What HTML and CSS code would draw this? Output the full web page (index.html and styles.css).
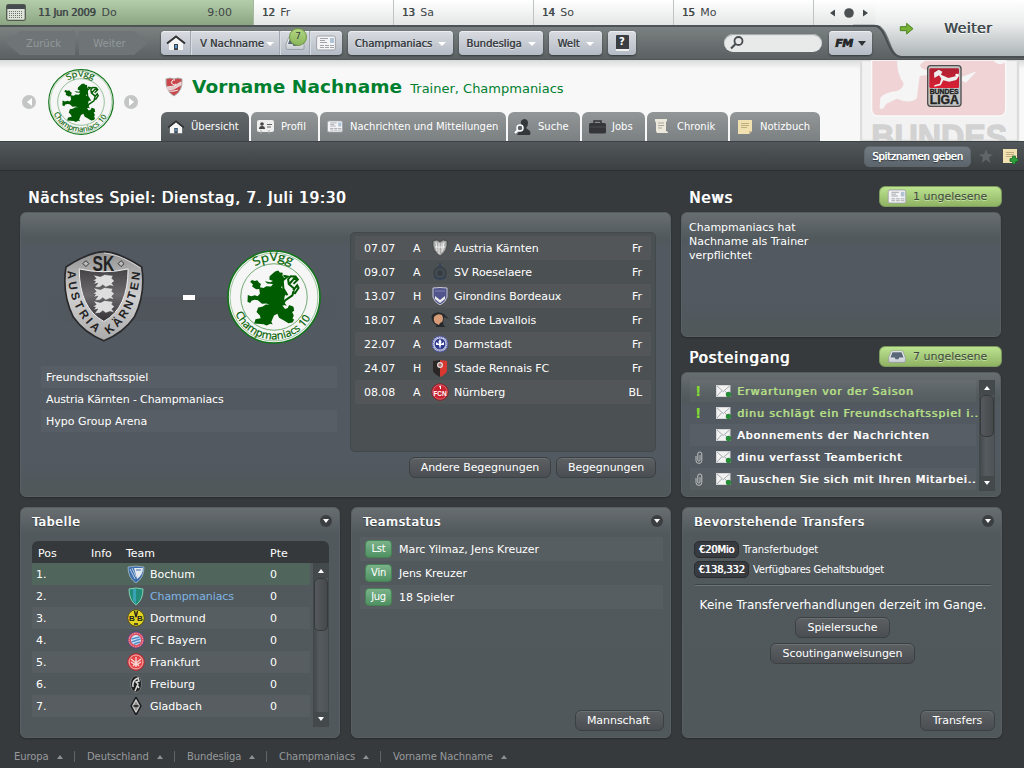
FILE: index.html
```html
<!DOCTYPE html>
<html lang="de">
<head>
    <meta charset="UTF-8">
    <meta name="viewport" content="width=device-width, initial-scale=1.0">
    <title>Vorname Nachname - Übersicht</title>
    <link rel="stylesheet" href="styles.css">
</head>
<body>
    <svg class="defs">
        <defs>
            <linearGradient id="hell" x2="0" y2="1"><stop offset="0" stop-color="#fff"/><stop offset="1" stop-color="#c4c8cf"/></linearGradient>
            <linearGradient id="rot" x2="0" y2="1"><stop offset="0" stop-color="#ae2032"/><stop offset="1" stop-color="#db1f35"/></linearGradient>
            <linearGradient id="silber" x2="0" y2="1"><stop offset="0" stop-color="#929292"/><stop offset=".5" stop-color="#d0d0d0"/><stop offset="1" stop-color="#aaa"/></linearGradient>
            <linearGradient id="dunkel" x2="0" y2="1"><stop offset="0" stop-color="#454346"/><stop offset=".5" stop-color="#6d6a6d"/><stop offset="1" stop-color="#343234"/></linearGradient>
            <linearGradient id="weiterBg" x2="0" y2="1"><stop offset="0" stop-color="#fff"/><stop offset=".4" stop-color="#eceeee"/><stop offset="1" stop-color="#adb4b6"/></linearGradient>
        </defs>
        <symbol id="haus" viewBox="0 0 20 16">
            <path d="M3 8 10 2l7 6v7H3z" fill="#f6f6f6"/>
            <path d="M1 8.500 10 1.500l9 7" fill="none" stroke="#303234" stroke-width="2"/>
            <path d="M8 9h4v6H8z" fill="#3d454d"/><path d="M9 10h2v3H9z" fill="#5b97cc"/>
        </symbol>
        <symbol id="zeitung" viewBox="0 0 20 16">
            <rect x=".6" y="1" width="18.800" height="14" rx="2" fill="#f4f4f6" stroke="#9ea2a8"/>
            <path d="M4 3.500h8M4 5.500h5M4 7.500h7M4 10.500h4M9 10.500h4M14 10.500h4M4 12.500h4M9 12.500h4M14 12.500h4" stroke="#a0a3a8"/>
            <path d="M14 3h4v5h-4z" fill="#b0c4d6"/>
        </symbol>
        <symbol id="ablage" viewBox="0 0 20 14">
            <path d="M4 1h12l3 7v4q0 1.500-1.500 1.500h-15Q1 13.500 1 12V8z" fill="url(#hell)" stroke="#8b9198" stroke-width=".7"/>
            <path d="M5 2.500h10L17 8h-4.500l-1 2h-3l-1-2H3z" fill="#596779"/>
        </symbol>
        <symbol id="brief" viewBox="0 0 16 13">
            <rect x=".5" y=".5" width="13.500" height="11" fill="#f2f2f3" stroke="#d4d6d8"/>
            <path d="M1 1l6.200 5.500L13.500 1M1 11l4.500-5M13.500 11 9 6" fill="none" stroke="#a5aaad"/>
            <circle cx="12.500" cy="9.500" r="2.700" fill="#278a37"/>
        </symbol>
        <symbol id="klammer" viewBox="0 0 8 13">
            <path d="M1 5v4.500a2.800 2.800 0 0 0 5.800 0V3a2 2 0 0 0-4 0v6a1 1 0 0 0 2.200 0V4" fill="none" stroke="#c9cccd" stroke-width=".9"/>
        </symbol>
        <symbol id="notiz" viewBox="0 0 14 14">
            <path d="M0 0h14v11l-3 3H0z" fill="#f1e0b0"/><path d="M14 11h-3v3z" fill="#cbb98d"/>
            <path d="M3 3.500h8M3 5.500h8M3 7.500h6" stroke="#b39f73" stroke-width=".8"/>
        </symbol>
    </svg>

    <div class="kalender">
        <div class="heute">
            <svg width="20" height="17" viewBox="0 0 20 17"><rect x=".7" y=".7" width="18.600" height="15.600" rx="1.500" fill="#dfe4da" stroke="#52594f" stroke-width="1.300"/><path d="M1 1h18v4H1z" fill="#454b50"/><path d="M3 7.500h14M3 9.500h14M3 11.500h14M3 13.500h14" stroke="#6d756b" stroke-dasharray="1 1"/></svg>
            <b>11 Jun 2009</b><span>Do</span><span class="uhr">9:00</span>
        </div>
        <div class="tag"><b>12</b> Fr</div>
        <div class="tag"><b>13</b> Sa</div>
        <div class="tag"><b>14</b> So</div>
        <div class="tag"><b>15</b> Mo</div>
        <svg class="kal-pfeile" width="40" height="12" viewBox="0 0 40 12"><path d="M6 2.500v7L1 6zM34 2.500v7l5-3.500z" fill="#444a4b"/><circle cx="20" cy="6" r="4.800" fill="#4c5051"/></svg>
    </div>

    <div class="navi">
        <div class="schritt zurueck">Zurück</div>
        <div class="schritt vor">Weiter</div>
        <div class="gruppe">
            <div class="btn-home"><svg width="20" height="16"><use href="#haus"/></svg></div>
            <div class="btn-name">V Nachname<i class="pfeil"></i></div>
            <div class="btn-ablage"><svg width="20" height="14"><use href="#ablage"/></svg><span class="zahl">7</span></div>
            <div class="btn-news"><svg width="20" height="16"><use href="#zeitung"/></svg></div>
        </div>
        <div class="btn-nav w-champ">Champmaniacs<i class="pfeil"></i></div>
        <div class="btn-nav w-liga">Bundesliga<i class="pfeil"></i></div>
        <div class="btn-nav w-welt">Welt<i class="pfeil"></i></div>
        <div class="btn-nav w-hilfe"><span class="buch">?</span></div>
        <div class="suche"><svg width="14" height="14" viewBox="0 0 14 14"><circle cx="8.500" cy="5" r="4" fill="none" stroke="#484e50" stroke-width="1.800"/><path d="M5.500 8 1 12.500" stroke="#484e50" stroke-width="2.200"/></svg></div>
        <div class="btn-nav w-fm"><span class="fm">FM</span><i class="pfeil"></i></div>
    </div>

    <div class="weiter">
        <svg width="171" height="60" viewBox="513 0 513 180">
            <path d="M580 0H1026V169H660C620 169 626 75 580 75z" fill="url(#weiterBg)"/>
            <path d="M513 77H575C618 77 612 171 658 171H1026" fill="none" stroke="#494f51" stroke-width="6"/>
            <path d="M655 80h19V70l19 16-19 16V92h-19z" fill="#76b035" stroke="#4d8420" stroke-width="3"/>
        </svg>
        <span>Weiter</span>
    </div>

    <div class="kopf">
        <i class="rund links"></i>
        <svg class="kopf-wappen" width="66" height="66" viewBox="0 0 280 280">
            <g id="loewe">
                <circle cx="140" cy="140" r="137" fill="#f5f6f5" stroke="#12751b" stroke-width="5"/>
                <circle cx="140" cy="140" r="131" fill="none" stroke="#75ad78" stroke-width="2"/>
                <circle cx="140" cy="140" r="99" fill="none" stroke="#308335" stroke-width="2"/>
                <g fill="#005c00">
                    <path d="M143 64l10-3 4 6 9 1-1 8 6 9-4 9 2 9-8 8 9 8 9 9-7 9-3 17 9 12-9-2-14 4-6-4-18 2-13-7-14 1-12-10-10-2-9 3-4 7-8-4 1-20 10 4 11-3 8 3 7-8-2-14-9 1-12-8 2-7-8-7 5-6 9 3 7-2 5 7 6 4-3 10 11 2 8-5 14 1 6-8-17-1-7-7 16 3 8-4-11-4 1-10z"/>
                    <path d="M88 185l5-14 12-2 11-7 21 1 14-5 12 5 10 13 8-3 4-9 13 5 2 12-6 4 5 10-4 9 5 4-5 8-12 2-12-7-16-9-5-12-10 5-8 19 4 8-7-2-11 5-9-4-28-2 4-13 15-3-2-8z"/>
                </g>
                <path d="M165 165l8-15 22-15 5-20-16-14-2-14 8-9 14 1 8 10M180 135l-12-20-2-24 14-12-12-2M184 103l16-18 10 4-12 12M197 120l12-15 4 8-12 18" fill="none" stroke="#005c00" stroke-width="6"/>
                <path id="bogenOben" d="M84 49A106 106 0 0 1 198 49" fill="none"/>
                <path id="bogenUnten" d="M25 189A124 124 0 0 0 256 186" fill="none"/>
                <text class="wappen-text" font-size="35"><textPath href="#bogenOben" textLength="113" lengthAdjust="spacingAndGlyphs">SpVgg</textPath></text>
                <text class="wappen-text" font-size="32"><textPath href="#bogenUnten" textLength="280" lengthAdjust="spacingAndGlyphs">Champmaniacs 10</textPath></text>
            </g>
        </svg>
        <i class="rund rechts"></i>
        <div class="kopf-mitte">
            <div class="titel">
                <svg width="20" height="20" viewBox="0 0 20 20"><path d="M2 2q4-2 8 0 4-2 8 0 1 12-8 17Q1 14 2 2z" fill="#c9484d" stroke="#aaa"/><path d="M3 10l7-1 7-4v3l-7 4-7 1zM5 14q5 1 9-1" stroke="#eadede" fill="#e5caca"/><path d="M11 3a2.500 2.500 0 1 0 1 4" stroke="#fff" fill="none"/></svg>
                <h1>Vorname Nachname</h1>
                <span>Trainer, Champmaniacs</span>
            </div>
            <div class="tabs">
                <div class="tab aktiv t1"><svg width="16" height="14" viewBox="1 0 18 16"><use href="#haus" width="20" height="16"/></svg>Übersicht</div>
                <div class="tab t2"><svg width="17" height="14" viewBox="0 0 17 14"><rect width="17" height="12" rx="2" fill="#eee"/><circle cx="5" cy="4" r="1.800" fill="#444"/><path d="M2 9q0-3 3-3t3 3z" fill="#444"/><path d="M10 4.500h5M10 7h4" stroke="#666"/><path d="M4 10v4M12 10v4" stroke="#aaa"/></svg>Profil</div>
                <div class="tab t3"><svg width="16" height="15"><use href="#zeitung"/></svg>Nachrichten und Mitteilungen</div>
                <div class="tab t4"><svg width="17" height="16" viewBox="0 0 17 16"><path d="M7 5q-1-4 3-5 4 0 4 4 0 3-2 5l4 3q1 2 0 4H3q2-4 5-6z" fill="#35383a"/><circle cx="6" cy="9" r="3" fill="#5c6164" stroke="#fff" stroke-width="1.500"/><path d="M4 11l-3 3" stroke="#fff" stroke-width="2"/></svg>Suche</div>
                <div class="tab t5"><svg width="17" height="14" viewBox="0 0 17 14"><path d="M5 3V1h7v2" fill="none" stroke="#303234" stroke-width="1.500"/><rect y="3" width="17" height="10.500" rx="1.500" fill="#343638"/><path d="M0 7h17" stroke="#4b4e50"/></svg>Jobs</div>
                <div class="tab t6"><svg width="14" height="15" viewBox="0 0 14 15"><path d="M0 0h12v2l-1 1v9l2 1v1H2l-1-2V4L0 2z" fill="#ece9dc"/><path d="M3 4h6M3 6.500h6M3 9h4" stroke="#aaa796"/></svg>Chronik</div>
                <div class="tab t7"><svg width="14" height="14"><use href="#notiz"/></svg>Notizbuch</div>
            </div>
        </div>
        <svg class="liga" width="160" height="81" viewBox="534 180 480 243">
            <path d="M537 180H1008V423H537z" fill="#f2f2f2" stroke="#dcdcdc" stroke-width="7"/>
            <path d="M569 180H971V328q0 20-20 20H589q-20 0-20-20z" fill="#efd3d5" stroke="#fafafa" stroke-width="4"/>
            <path d="M645 180q0 45 20 70-2 17-20 23-35 3-50 20l-2 32q11 7 19-13l33-16q40 18 60-2 3-30 8-65 15-5 30-2V213Q690 200 735 180zM838 231l46-17-32 34-14-6z" fill="#f5f5f5"/>
            <path d="M932 180q20 22 39 6v-6z" fill="#f5f5f5"/>
            <text x="568" y="446" class="liga-gross" font-size="106" textLength="408" lengthAdjust="spacingAndGlyphs">BUNDES</text>
            <rect x="737" y="197" width="100" height="122" rx="9" fill="#c4c4c4" stroke="#4e4e4e" stroke-width="4"/>
            <rect x="742" y="205" width="89" height="59" rx="4" fill="url(#rot)"/>
            <path d="M756 218l14-9 11 6-4 9 22 10 24-6 7-8 1 8-8 12-22 5-17-4-8 15-20 4 2-5 15-4 5-15-7-10-14 8z" fill="#eee"/><circle cx="824" cy="225" r="4" fill="#fff"/>
            <text x="743" y="281" class="liga-klein" font-size="19" textLength="87" lengthAdjust="spacingAndGlyphs">BUNDES</text>
            <text x="743" y="311" class="liga-klein" font-size="36" textLength="88" lengthAdjust="spacingAndGlyphs">LIGA</text>
        </svg>
    </div>

    <div class="leiste">
        <div class="spitzname">Spitznamen geben</div>
        <svg width="14" height="14" viewBox="0 0 14 14"><path d="M7 0l2 5 5 .2-4 3.200L11.500 14 7 10.800 2.500 14 4 8.400 0 5.200 5 5z" fill="#5f6568"/></svg>
        <svg width="15" height="15" viewBox="0 0 15 15"><use href="#notiz" width="14" height="14"/><path d="M9.500 7h3v2.500H15v3h-2.500V15h-3v-2.500H7v-3h2.500z" fill="#2aa239" stroke="#145f22" stroke-width=".7"/></svg>
    </div>

    <div class="inhalt">
        <div class="oben">
            <div class="spiel">
                <h2>Nächstes Spiel: Dienstag, 7. Juli 19:30</h2>
                <div class="panel spiel-panel">
                    <div class="begegnung">
                        <div class="wappen-reihe">
                            <svg width="82" height="93" viewBox="0 0 245 280">
                                <path d="M122 5Q170 8 236 51 249 130 214 202 180 251 122 273 64 251 30 202-5 130 8 51 74 8 122 5z" fill="url(#silber)" stroke="#29292c" stroke-width="5"/>
                                <path d="M122 9Q170 12 232 54" fill="none" stroke="#eee" stroke-width="2"/>
                                <path d="M48 57Q122 74 195 57 195 175 122 215 48 175 48 57z" fill="url(#dunkel)" stroke="#eee" stroke-width="3"/>
                                <g fill="#dedede" stroke="#39393b" stroke-width="1.500">
                                    <path d="M90 75l22 5 12-6 26 3-4 8 8 8-8 7 8 10-14-3-12 5-9-7-9 7-16 1 10-13-13 3 6-9-9-2 11-6z"/>
                                    <path d="M90 114l22 5 12-6 26 3-4 8 8 8-8 7 8 10-14-3-12 5-9-7-9 7-16 1 10-13-13 3 6-9-9-2 11-6z"/>
                                    <path d="M90 153l22 5 12-6 26 3-4 8 8 8-8 7 8 10-14-3-12 5-9-7-9 7-16 1 10-13-13 3 6-9-9-2 11-6z"/>
                                </g>
                                <path d="M68 32l9 9-9 9-9-9zM174 32l9 9-9 9-9-9z" fill="#bbb" stroke="#333" stroke-width="3"/>
                                <path id="kLinks" d="M13 62Q15 186 106 255" fill="none"/>
                                <path id="kRechts" d="M136 255Q224 195 232 58" fill="none"/>
                                <text class="austria-text" x="88" y="62" font-size="64" textLength="65" lengthAdjust="spacingAndGlyphs">SK</text>
                                <text class="austria-text" font-size="35"><textPath href="#kLinks" textLength="212" lengthAdjust="spacing">AUSTRIA</textPath></text>
                                <text class="austria-text" font-size="35"><textPath href="#kRechts" textLength="219" lengthAdjust="spacing">KÄRNTEN</textPath></text>
                            </svg>
                            <i class="strich"></i>
                            <svg width="94" height="94" viewBox="0 0 280 280"><use href="#loewe"/></svg>
                        </div>
                        <div class="zeile hell">Freundschaftsspiel</div>
                        <div class="zeile enger">Austria Kärnten - Champmaniacs</div>
                        <div class="zeile hell">Hypo Group Arena</div>
                    </div>
                    <div class="termine">
                        <div class="termin-liste">
                            <div class="termin"><span>07.07</span><span>A</span><svg width="18" height="18" viewBox="0 0 18 18"><path d="M2 2l4-1 3 2 3-2 4 1q1 10-7 15Q1 12 2 2z" fill="#aaa" stroke="#333" stroke-width=".6"/><path d="M5 3l1 9M8 4v11M11 4v9M13 3l-1 8M4 8h10" stroke="#f0f0f0" fill="none"/></svg><span>Austria Kärnten</span><em>Fr</em></div>
                            <div class="termin"><span>09.07</span><span>A</span><svg width="18" height="18" viewBox="0 0 18 18"><circle cx="9" cy="10" r="6" fill="#444b50" stroke="#2e373e"/><path d="M3 14q6 4 12 0" stroke="#2b405a" fill="none" stroke-width="1.500"/><path d="M9 0v5" stroke="#333e5c" stroke-width="1.500"/><circle cx="9" cy="10" r="2.500" fill="#353b40"/></svg><span>SV Roeselaere</span><em>Fr</em></div>
                            <div class="termin"><span>13.07</span><span>H</span><svg width="18" height="18" viewBox="0 0 18 18"><path d="M2 1q7-1 14 0v9q-1 5-7 8-6-3-7-8z" fill="#51548b" stroke="#c6c8d6"/><path d="M4 4h10" stroke="#7e82b0"/><path d="M4 9l5 4 5-4v3l-5 4-5-4z" fill="#eee"/></svg><span>Girondins Bordeaux</span><em>Fr</em></div>
                            <div class="termin"><span>18.07</span><span>A</span><svg width="18" height="18" viewBox="0 0 18 18"><path d="M1 4Q6-1 13 3l5 5-5-2-1 6 1 3-7 0Q-1 10 1 4z" fill="#27292a"/><path d="M3 6q3-4 8-2 2 4 0 7l-2 1-1 2-4-2Q2 9 3 6z" fill="#d89c78"/><path d="M5 15.500h9" stroke="#25282a"/></svg><span>Stade Lavallois</span><em>Fr</em></div>
                            <div class="termin"><span>22.07</span><span>A</span><svg width="18" height="18" viewBox="0 0 18 18"><circle cx="9" cy="9" r="8" fill="#d0d2e4" stroke="#4b529a"/><circle cx="9" cy="9" r="6.800" fill="none" stroke="#4b529a" stroke-dasharray="1 1"/><circle cx="9" cy="9" r="5.500" fill="#2e3990"/><path d="M9 4l1.500 2.500L10 9l3-2v3l-3 0-1 4-1-4-3 0V7l3 2-.500-2.500z" fill="#fff"/></svg><span>Darmstadt</span><em>Fr</em></div>
                            <div class="termin"><span>24.07</span><span>H</span><svg width="18" height="18" viewBox="0 0 18 18"><path d="M2 2l7-1v17q-6-3-7-6z" fill="#292625"/><path d="M9 1l7 1v10q-2 4-7 6z" fill="#d93831"/><circle cx="9" cy="6" r="3" fill="#ddd"/><path d="M9 4v4M7 6h4" stroke="#a44"/></svg><span>Stade Rennais FC</span><em>Fr</em></div>
                            <div class="termin"><span>08.08</span><span>A</span><svg width="18" height="18" viewBox="0 0 18 18"><circle cx="9" cy="9" r="8.200" fill="#c92331" stroke="#842027"/><circle cx="9" cy="9" r="7.200" fill="none" stroke="#e07f86" stroke-width=".7"/><text x="2.500" y="12.500" class="mini" font-size="6.500" fill="#fff" textLength="13" lengthAdjust="spacingAndGlyphs">FCN</text><path d="M8 4l1.500-1v3" stroke="#fff" fill="none"/></svg><span>Nürnberg</span><em>BL</em></div>
                        </div>
                        <div class="knoepfe"><div class="knopf k1">Andere Begegnungen</div><div class="knopf k2">Begegnungen</div></div>
                    </div>
                </div>
            </div>

            <div class="seite">
                <div class="seite-kopf"><h2>News</h2><div class="gruen"><svg width="20" height="15"><use href="#zeitung"/></svg>1 ungelesene</div></div>
                <div class="panel news-panel">Champmaniacs hat<br>Nachname als Trainer<br>verpflichtet</div>
                <div class="seite-kopf post-kopf"><h2>Posteingang</h2><div class="gruen"><svg width="20" height="13"><use href="#ablage"/></svg>7 ungelesene</div></div>
                <div class="panel post-panel">
                    <div class="mails">
                        <div class="mail hell neu"><b class="ausruf">!</b><svg width="16" height="13"><use href="#brief"/></svg><span>Erwartungen vor der Saison</span></div>
                        <div class="mail neu"><b class="ausruf">!</b><svg width="16" height="13"><use href="#brief"/></svg><span>dinu schlägt ein Freundschaftsspiel i..</span></div>
                        <div class="mail hell"><i></i><svg width="16" height="13"><use href="#brief"/></svg><span>Abonnements der Nachrichten</span></div>
                        <div class="mail"><i><svg width="8" height="13"><use href="#klammer"/></svg></i><svg width="16" height="13"><use href="#brief"/></svg><span>dinu verfasst Teambericht</span></div>
                        <div class="mail hell"><i><svg width="8" height="13"><use href="#klammer"/></svg></i><svg width="16" height="13"><use href="#brief"/></svg><span>Tauschen Sie sich mit Ihren Mitarbei..</span></div>
                    </div>
                    <div class="scroll"><i class="auf"></i><div class="griff"></div><i class="ab"></i></div>
                </div>
            </div>
        </div>

        <div class="unten">
            <div class="panel karte">
                <div class="karte-kopf"><h3>Tabelle</h3><i class="klapp"></i></div>
                <div class="tabelle">
                    <div class="tab-kopf"><span>Pos</span><span>Info</span><span>Team</span><span>Pte</span></div>
                    <div class="tab-inhalt">
                        <div class="tab-zeilen">
                            <div class="platz erster"><span>1.</span><svg width="18" height="18" viewBox="0 0 18 18"><path d="M1 2l8-1 8 1q0 11-8 16Q1 13 1 2z" fill="#3b6eac" stroke="#cbd6e0" stroke-width=".6"/><path d="M7 3h9q0 7-6 11z" fill="#e5eaf0"/><path d="M3 4l5 10M5 3l4 9" stroke="#b9cde1"/><path d="M9 5h5" stroke="#3b6eac"/></svg><span>Bochum</span><span>0</span></div>
                            <div class="platz"><span>2.</span><svg width="18" height="18" viewBox="0 0 18 18"><path d="M2 2q7-2 14 0 0 11-7 16Q2 13 2 2z" fill="#228b79" stroke="#80d3b0"/><path d="M6 2v11l3 4V2z" fill="#3aa2b5"/></svg><span class="eigen">Champmaniacs</span><span>0</span></div>
                            <div class="platz hell"><span>3.</span><svg width="18" height="18" viewBox="0 0 18 18"><circle cx="9" cy="9" r="8.300" fill="#e1d31f" stroke="#53501b"/><text x="2" y="12" class="mini" font-size="8" fill="#222">B</text><text x="10" y="12" class="mini" font-size="8" fill="#222">B</text><path d="M7.500 2l1.500 6 1.500-6M7 15h4" stroke="#222" fill="none" stroke-width="1.400"/></svg><span>Dortmund</span><span>0</span></div>
                            <div class="platz"><span>4.</span><svg width="18" height="18" viewBox="0 0 18 18"><circle cx="9" cy="9" r="8.300" fill="#d64c60" stroke="#484f86"/><circle cx="9" cy="9" r="6.800" fill="none" stroke="#eea6af" stroke-dasharray="1.500 1"/><circle cx="9" cy="9" r="5" fill="#d8e5f4"/><path d="M4.500 8l8-2M4.500 11l9-3M7 13l6-2" stroke="#4d8dc9" stroke-width="1.500"/></svg><span>FC Bayern</span><span>0</span></div>
                            <div class="platz hell"><span>5.</span><svg width="18" height="18" viewBox="0 0 18 18"><circle cx="9" cy="9" r="8.300" fill="#e64548" stroke="#ad2b31"/><circle cx="9" cy="9" r="7" fill="none" stroke="#f2b2b2"/><path d="M9 4v10M4 6l5 4 5-4M4 9l5 3 5-3M6 13l3-3 3 3" fill="none" stroke="#f6dada" stroke-width="1.300"/></svg><span>Frankfurt</span><span>0</span></div>
                            <div class="platz"><span>6.</span><svg width="18" height="18" viewBox="0 0 18 18"><ellipse cx="9" cy="9" rx="5.500" ry="8.300" fill="#1e1f20" stroke="#70777a"/><path d="M6 12Q5 5 11 3l1 3-3 1 2 2-3 7M10 10l2 3" fill="none" stroke="#ddd" stroke-width="1.500"/></svg><span>Freiburg</span><span>0</span></div>
                            <div class="platz hell"><span>7.</span><svg width="18" height="18" viewBox="0 0 18 18"><path d="M9 0l5 9-5 9-5-9z" fill="#888" stroke="#17191a" stroke-width="1.300"/><path d="M9 3l3 6-3 6-3-6z" fill="none" stroke="#ddd"/><path d="M6.500 9h5" stroke="#333" stroke-width="2"/></svg><span>Gladbach</span><span>0</span></div>
                        </div>
                        <div class="scroll"><i class="auf"></i><div class="griff"></div><i class="ab"></i></div>
                    </div>
                </div>
            </div>

            <div class="panel karte status">
                <div class="karte-kopf"><h3>Teamstatus</h3><i class="klapp"></i></div>
                <div class="status-zeile hell"><b>Lst</b>Marc Yilmaz, Jens Kreuzer</div>
                <div class="status-zeile"><b>Vin</b>Jens Kreuzer</div>
                <div class="status-zeile hell"><b>Jug</b>18 Spieler</div>
                <div class="knopf k3">Mannschaft</div>
            </div>

            <div class="panel karte transfers">
                <div class="karte-kopf"><h3>Bevorstehende Transfers</h3><i class="klapp"></i></div>
                <div class="budget"><b class="b1">€20Mio</b>Transferbudget</div>
                <div class="budget"><b class="b2">€138,332</b>Verfügbares Gehaltsbudget</div>
                <div class="verhandlung">Keine Transferverhandlungen derzeit im Gange.</div>
                <div class="knopf k4">Spielersuche</div>
                <div class="knopf k5">Scoutinganweisungen</div>
                <div class="knopf k6">Transfers</div>
            </div>
        </div>
    </div>

    <div class="fuss">
        <span class="f1">Europa<i></i></span>
        <span class="f2">Deutschland<i></i></span>
        <span class="f3">Bundesliga<i></i></span>
        <span class="f4">Champmaniacs<i></i></span>
        <span>Vorname Nachname<i></i></span>
    </div>
</body>
</html>
```
FILE: styles.css
```css
* {
    box-sizing: border-box;
}

body {
    margin: 0;
    width: 1024px;
    height: 768px;
    overflow: hidden;
    position: relative;
    display: flex;
    flex-direction: column;
    background: #363a3d;
    color: #fff;
    font-family: "DejaVu Sans", sans-serif;
    font-size: 11px;
    white-space: nowrap;
}

.defs {
    position: absolute;
    width: 0;
    height: 0;
}

svg {
    flex: none;
    display: block;
}

h1, h2, h3 {
    margin: 0;
}

/* Kalenderleiste */
.kalender {
    display: flex;
    align-items: center;
    height: 25px;
    color: #3f4748;
    background: linear-gradient(#fff, #e4e6e6);
}

.heute {
    width: 254px;
    height: 25px;
    display: flex;
    align-items: center;
    padding: 0 21px 0 6px;
    background: linear-gradient(#b4cda9, #8ba583);
    border-right: 1px solid #a3b89c;
}

.heute b {
    margin-left: 12px;
    margin-right: 6px;
    font-weight: normal;
    font-size: 10px;
    letter-spacing: -.25px;
    text-shadow: .6px 0 0 #3f4748;
}

.uhr {
    margin-left: auto;
}

.tag {
    width: 140px;
    height: 25px;
    line-height: 25px;
    padding-left: 8px;
    border-right: 1px solid #bfc3c4;
}

.tag b {
    font-size: 10px;
    font-weight: normal;
    text-shadow: .6px 0 0 #3f4748;
    margin-right: 2px;
}

.kal-pfeile {
    margin-left: 15px;
    position: relative;
    z-index: 2;
}

/* Navigation */
.navi {
    height: 35px;
    display: flex;
    align-items: flex-start;
    padding: 5px 0 0 6px;
    border-top: 2px solid #4e5455;
    border-bottom: 1px solid #505657;
    background: linear-gradient(#7a8180, #5b6062);
    color: #3c4245;
    font-size: 10px;
}

.schritt {
    width: 69px;
    height: 24px;
    line-height: 25px;
    text-align: center;
    color: #92989a;
    background: #6f7576;
    margin-top: -1px;
    margin-right: 4px;
}

.zurueck {
    clip-path: polygon(0 50%, 14px 0, 100% 0, 100% 100%, 14px 100%);
    padding-left: 6px;
}

.vor {
    clip-path: polygon(0 0, 55px 0, 100% 50%, 55px 100%, 0 100%);
    padding-right: 8px;
    margin-right: 13px;
}

.gruppe, .btn-nav {
    display: flex;
    align-items: center;
    height: 24px;
    margin-top: -1px;
    border-radius: 4px;
    background: linear-gradient(#d9dce1, #b5bbc5);
    box-shadow: 0 1px 2px #33383a, inset 0 1px 0 #eceef0;
    text-shadow: .3px 0 0 #3c4245, 0 1px 0 #e3e6ea;
}

.gruppe {
    width: 181px;
    margin-right: 6px;
}

.gruppe > div {
    display: flex;
    align-items: center;
    justify-content: center;
    height: 24px;
    position: relative;
}

.gruppe > div + div {
    border-left: 1px solid #a2a8b2;
    box-shadow: inset 1px 0 0 #d9dde2;
}

.gruppe .btn-name {
    justify-content: flex-start;
    padding-left: 9px;
}

.btn-name .pfeil {
    margin-left: 2px;
}

.btn-home { width: 29px; }
.btn-name { width: 89px; }
.btn-ablage { width: 30px; }
.btn-news { width: 33px; }

.zahl {
    position: absolute;
    top: -3px;
    left: 9px;
    width: 18px;
    height: 18px;
    line-height: 15px;
    border-radius: 50%;
    border: 1px solid #6c9340;
    background: linear-gradient(#b2d682, #8ab65b);
    text-align: center;
    text-shadow: none;
    font-size: 9px;
}

.pfeil {
    border: 4px solid transparent;
    border-top-color: #fff;
    border-bottom: 0;
    margin-left: 6px;
    margin-top: 2px;
}

.btn-nav {
    justify-content: center;
    margin-right: 6px;
}

.w-champ { width: 105px; }
.w-liga { width: 84px; }
.w-welt { width: 53px; }
.w-hilfe { width: 28px; }

.w-fm {
    width: 43px;
    margin: -1px 0 0 6px;
}

.w-fm .pfeil {
    border-top: 5px solid #303436;
    border-left-width: 4px;
    margin-left: 5px;
    margin-top: 0;
}

.fm {
    font: italic bold 11px "DejaVu Sans", sans-serif;
    letter-spacing: -.5px;
    color: #26292b;
    -webkit-text-stroke: .6px #26292b;
}

.buch {
    width: 13px;
    height: 16px;
    line-height: 13px;
    border-radius: 1px;
    border-bottom: 2px solid #f1f1f1;
    background: #3a3e42;
    color: #fff;
    text-align: center;
    font-weight: bold;
    text-shadow: none;
}

.suche {
    width: 98px;
    height: 18px;
    margin: 2px 1px 0 82px;
    padding: 2px 0 0 6px;
    border-radius: 9px;
    background: #e8eaea;
    box-shadow: inset 0 1px 1px #a0a5a6;
}

.weiter {
    position: absolute;
    right: 0;
    top: 0;
}

.weiter span {
    position: absolute;
    left: 91px;
    top: 20px;
    font-size: 14px;
    letter-spacing: .45px;
    color: #3d484b;
    text-shadow: .6px 0 0 #3d484b, 0 1px 0 #fff;
}

/* Kopfbereich */
.kopf {
    height: 81px;
    display: flex;
    background: linear-gradient(#d9dada, #f8f8f8 9px);
}

.rund {
    width: 14px;
    height: 14px;
    margin: 35px 0 0 22px;
    border-radius: 50%;
    background: #c4c5c5;
    display: flex;
    align-items: center;
    justify-content: center;
}

.rund::before {
    content: "";
    border: 4px solid transparent;
}

.links::before {
    border-right: 5px solid #fff;
    border-left: 0;
}

.rechts::before {
    border-left: 5px solid #fff;
    border-right: 0;
}

.kopf-wappen {
    margin: 9px 0 0 12px;
}

.kopf .rechts {
    margin-left: 10px;
}

.wappen-text {
    font-family: "Open Sans", sans-serif;
    fill: #006000;
    stroke: #006000;
    stroke-width: .6;
}

.austria-text {
    font-family: "Liberation Sans", sans-serif;
    font-weight: bold;
    fill: #222223;
}

.kopf-mitte {
    width: 661px;
    margin-left: 23px;
}

.titel {
    display: flex;
    align-items: center;
    height: 52px;
    padding-top: 1px;
    padding-left: 3px;
    color: #00802f;
}

.titel h1 {
    font-size: 18.5px;
    margin: 0 8px 0 8px;
    letter-spacing: .1px;
}

.titel span {
    font-size: 13px;
    padding-top: 3px;
}

.tabs {
    display: flex;
    gap: 2px;
}

.tab {
    height: 29px;
    display: flex;
    align-items: center;
    gap: 7px;
    padding-left: 7px;
    border-radius: 6px 6px 0 0;
    background: linear-gradient(#929697, #7b8082);
    font-size: 10px;
}

.tab.aktiv {
    background: linear-gradient(#63696b, #4f5558);
}

.t1 { width: 88px; }
.t2 { width: 67px; padding-left: 6px; }
.t3 { width: 186px; }
.t4 { width: 72px; padding-left: 6px; }
.t5 { width: 63px; gap: 6px; }
.t6 { width: 81px; gap: 8px; padding-left: 8px; }
.t7 { width: 90px; gap: 8px; padding-left: 8px; }

.liga {
    margin-left: 38px;
}

.liga-gross {
    font-family: "Liberation Sans", sans-serif;
    font-weight: bold;
    fill: #d2d2d2;
    stroke: #d2d2d2;
    stroke-width: 4;
}

.liga-klein {
    font-family: "Liberation Sans", sans-serif;
    font-weight: bold;
    fill: #222;
    stroke: #222;
    stroke-width: 1;
}

.mini {
    font-family: "Liberation Sans", sans-serif;
    font-weight: bold;
}

.leiste {
    height: 30px;
    display: flex;
    align-items: center;
    justify-content: flex-end;
    padding-right: 6px;
    border-top: 1px solid #3c4143;
    border-bottom: 1px solid #2c3032;
    background: linear-gradient(#51575a, #3c4042);
}

.spitzname {
    width: 107px;
    height: 21px;
    line-height: 20px;
    margin-right: 8px;
    border-radius: 5px;
    border: 1px solid #5e666c;
    background: linear-gradient(#727b82, #5c646c);
    text-align: center;
    font-size: 10px;
    letter-spacing: -.2px;
    text-shadow: .4px 0 0 #fff, 0 1px 1px #2c3133;
}

.leiste svg {
    margin-right: 9px;
}

.leiste svg:last-child {
    margin: 0 0 0 1px;
}

/* Inhalt */
.inhalt {
    padding: 16px 22px 0 20px;
    height: 567px;
}

.oben {
    display: flex;
    gap: 10px;
    height: 310px;
}

h2 {
    font-size: 15px;
    font-weight: normal;
    letter-spacing: .83px;
    text-shadow: .8px 0 0 #fff;
    height: 25px;
    line-height: 22px;
    padding-left: 8px;
}

.panel {
    border-radius: 6px;
    border: 1px solid #585f62;
    background: linear-gradient(#686d70, #51595c 25px, #525960 34px, #525960 calc(100% - 34px), #50585a);
    box-shadow: 0 1px 2px #282c2e;
}

.spiel-panel {
    width: 651px;
    height: 285px;
    display: flex;
    padding: 19px 14px 0 20px;
}

.begegnung {
    width: 296px;
    margin-right: 13px;
}

.wappen-reihe {
    height: 134px;
    display: flex;
    align-items: flex-start;
    padding: 18px 0 0 22px;
    background: linear-gradient(90deg, transparent, #4f555a 20%, #4f555a 85%, transparent) 0 65px / 100% 24px no-repeat;
}

.strich {
    width: 12px;
    height: 5px;
    margin: 45px 32px 0 38px;
    background: #fff;
}

.zeile {
    height: 22px;
    line-height: 23px;
    padding-left: 5px;
}

.enger {
    letter-spacing: -.13px;
}

.hell {
    background: rgba(255, 255, 255, .035);
}

.termin-liste {
    width: 306px;
    height: 220px;
    padding: 3px 4px;
    border: 1px solid #42484b;
    border-radius: 5px;
    background: #4b5053;
}

.termin {
    display: grid;
    grid-template-columns: 49px 18px 23px 1fr auto;
    align-items: center;
    height: 24px;
    padding: 0 9px;
    letter-spacing: -.06px;
}

.termin:nth-child(odd) {
    background: #525659;
}

.termin em {
    font-style: normal;
}

.knoepfe {
    display: flex;
    justify-content: flex-end;
    gap: 5px;
    margin-top: 5px;
}

.knopf {
    height: 21px;
    line-height: 20px;
    border-radius: 6px;
    border: 1px solid #3b4043;
    background: linear-gradient(#5c6063, #4a4e52);
    box-shadow: inset 0 1px 0 #6b7073;
    text-align: center;
    letter-spacing: -.05px;
}

.k1 { width: 142px; }
.k2 { width: 100px; }

/* rechte Spalte */
.seite {
    width: 321px;
}

.seite-kopf {
    display: flex;
    justify-content: space-between;
    height: 25px;
}

.post-kopf {
    margin-top: 10px;
}

.gruen {
    width: 123px;
    height: 21px;
    margin-top: -1px;
    display: flex;
    align-items: center;
    padding-left: 7px;
    gap: 6px;
    border-radius: 6px;
    border: 1px solid #7d9b5e;
    background: linear-gradient(#bce38f, #8fb363);
    color: #3c463c;
    text-shadow: 0 1px 0 #c5dfa8;
}

.news-panel {
    width: 320px;
    height: 125px;
    padding: 8px 7px;
    line-height: 14px;
}

.post-panel {
    width: 320px;
    height: 125px;
    display: flex;
    padding: 7px 0 0 8px;
}

.mails {
    width: 286px;
    margin-right: 3px;
}

.mail {
    height: 22px;
    display: flex;
    align-items: center;
    text-shadow: .7px 0 0 currentColor;
    letter-spacing: .89px;
}

.mail span {
    margin-left: 5px;
    padding-top: 1px;
}

.mail i, .ausruf {
    flex: none;
    width: 26px;
    padding-left: 5px;
}

.mail.neu {
    color: #b4de87;
}

.mail .ausruf {
    color: #82db32;
    font-size: 14px;
    text-shadow: none;
}

.scroll {
    width: 16px;
    height: 111px;
    flex: none;
    display: flex;
    flex-direction: column;
    background: linear-gradient(90deg, #43484b, #565b60 40%, #4e5357);
    border: 1px solid #43484b;
}

.auf, .ab {
    height: 14px;
    background: #44494c;
    display: flex;
    align-items: center;
    justify-content: center;
}

.auf::before, .ab::before {
    content: "";
    border: 3.5px solid transparent;
}

.auf::before {
    border-bottom: 4px solid #fff;
    border-top: 0;
}

.ab::before {
    border-top: 4px solid #fff;
    border-bottom: 0;
}

.ab {
    margin-top: auto;
}

.griff {
    height: 42px;
    border-radius: 5px;
    border: 1px solid #34393b;
    background: linear-gradient(90deg, #55595d, #45494c);
}

/* untere Karten */
.unten {
    display: flex;
    gap: 11px;
    margin-top: 10px;
}

.karte {
    width: 320px;
    height: 231px;
    background: linear-gradient(#686d70, #51595c 26px, #51585b);
}

.karte-kopf {
    display: flex;
    justify-content: space-between;
    padding: 7px 7px 0 11px;
    height: 33px;
}

h3 {
    font-size: 12px;
    font-weight: normal;
    letter-spacing: .93px;
    text-shadow: .7px 0 0 #fff, 0 1px 1px #2f3436;
}

.klapp {
    width: 12px;
    height: 12px;
    border-radius: 50%;
    background: #3b3f42;
    display: flex;
    align-items: center;
    justify-content: center;
}

.klapp::before {
    content: "";
    border: 3.5px solid transparent;
    border-top: 4px solid #fff;
    border-bottom: 0;
}

.tabelle {
    width: 297px;
    margin-left: 11px;
}

.tab-kopf {
    display: grid;
    grid-template-columns: 53px 35px 144px auto;
    height: 22px;
    line-height: 25px;
    padding-left: 6px;
    border-radius: 6px 6px 0 0;
    background: #35393c;
}

.tab-inhalt {
    display: flex;
    justify-content: space-between;
}

.tab-inhalt .scroll {
    height: 164px;
}

.tab-inhalt .griff {
    height: 53px;
}

.tab-zeilen {
    width: 278px;
}

.platz {
    display: grid;
    grid-template-columns: 91px 23px 120px auto;
    align-items: center;
    height: 22px;
    padding-left: 4px;
}

.erster {
    background: #50655c;
}

.eigen {
    color: #7fb5e4;
    letter-spacing: -.1px;
}

.status .karte-kopf {
    height: 29px;
}

.status-zeile {
    width: 303px;
    height: 24px;
    margin-left: 8px;
    display: flex;
    align-items: center;
    padding-left: 5px;
    letter-spacing: -.05px;
}

.status-zeile b {
    width: 27px;
    height: 18px;
    line-height: 15px;
    margin-right: 7px;
    border-radius: 4px;
    border: 1px solid #478254;
    background: linear-gradient(#7bb28a, #4f9162);
    text-align: center;
    font-size: 10px;
    letter-spacing: -.3px;
    font-weight: normal;
}

.k3 {
    width: 89px;
    margin: 101px 0 0 223px;
    padding-right: 2px;
}

.budget {
    display: flex;
    align-items: center;
    height: 20px;
    font-size: 10px;
    letter-spacing: -.03px;
    margin-left: 11px;
    gap: 4px;
}

.budget + .budget {
    letter-spacing: -.25px;
}

.transfers .karte-kopf {
    height: 31px;
}

.budget b {
    height: 17px;
    line-height: 15px;
    border-radius: 5px;
    border: 1px solid #292d30;
    background: #373b3f;
    text-align: center;
    font-weight: normal;
    letter-spacing: -.2px;
    text-shadow: .6px 0 0 #fff;
}

.b1 { width: 45px; }
.b2 { width: 55px; }

.verhandlung {
    margin: 5px 10px 0 12px;
    height: 33px;
    line-height: 40px;
    border-top: 1px solid #3e4447;
    box-shadow: inset 0 1px 0 #6c7275;
    text-align: center;
    font-size: 12px;
}

.k4 {
    width: 95px;
    margin: 0 auto 5px 112px;
}

.k5 {
    width: 145px;
    margin-left: 87px;
}

.k6 {
    width: 75px;
    margin: 46px 0 0 237px;
}

/* Fußleiste */
.fuss {
    height: 30px;
    display: flex;
    align-items: center;
    padding: 7px 0 0 14px;
    color: #96999b;
    font-size: 10px;
    letter-spacing: -.1px;
}

.fuss span {
    display: flex;
    align-items: center;
    margin-right: 12px;
}

.fuss i {
    border: 3px solid transparent;
    border-bottom: 4px solid #8e9193;
    border-top: 0;
    margin-left: 8px;
}

.f1, .f2, .f3, .f4 {
    border-right: 1px solid #606466;
}

.f1 { width: 61px; }
.f2 { width: 88px; }
.f3 { width: 80px; }
.f4 { width: 102px; }
```
